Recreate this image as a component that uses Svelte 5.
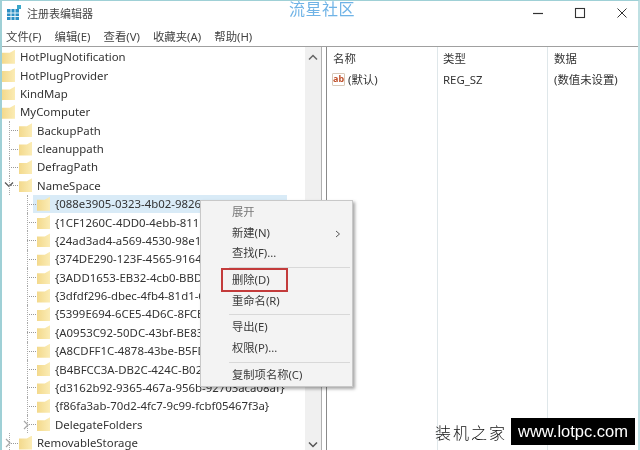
<script>
	const menus = ["文件(F)", "编辑(E)", "查看(V)", "收藏夹(A)", "帮助(H)"];

	// depth: 0 root, 1 child, 2 grandchild
	const rows = [
		{ name: "HotPlugNotification", depth: 0 },
		{ name: "HotPlugProvider", depth: 0 },
		{ name: "KindMap", depth: 0 },
		{ name: "MyComputer", depth: 0 },
		{ name: "BackupPath", depth: 1 },
		{ name: "cleanuppath", depth: 1 },
		{ name: "DefragPath", depth: 1 },
		{ name: "NameSpace", depth: 1, arrow: "open" },
		{ name: "{088e3905-0323-4b02-9826-5d99428e115f}", depth: 2, selected: true },
		{ name: "{1CF1260C-4DD0-4ebb-811F-33C572699FDE}", depth: 2 },
		{ name: "{24ad3ad4-a569-4530-98e1-ab02f9417aa8}", depth: 2 },
		{ name: "{374DE290-123F-4565-9164-39C4925E467B}", depth: 2 },
		{ name: "{3ADD1653-EB32-4cb0-BBD7-DFA0ABB5ACCA}", depth: 2 },
		{ name: "{3dfdf296-dbec-4fb4-81d1-6a3438bcf4de}", depth: 2 },
		{ name: "{5399E694-6CE5-4D6C-8FCE-1D8870FDCBA0}", depth: 2 },
		{ name: "{A0953C92-50DC-43bf-BE83-3742FED03C9C}", depth: 2 },
		{ name: "{A8CDFF1C-4878-43be-B5FD-F8091C1C60D0}", depth: 2 },
		{ name: "{B4BFCC3A-DB2C-424C-B029-7FE99A87C641}", depth: 2 },
		{ name: "{d3162b92-9365-467a-956b-92703aca08af}", depth: 2 },
		{ name: "{f86fa3ab-70d2-4fc7-9c99-fcbf05467f3a}", depth: 2 },
		{ name: "DelegateFolders", depth: 2, arrow: "closed" },
		{ name: "RemovableStorage", depth: 1, arrow: "closed" },
	];

	const menuGroups = [
		[{ label: "展开", disabled: true }, { label: "新建(N)", sub: true }, { label: "查找(F)..." }],
		[{ label: "删除(D)", marked: true }, { label: "重命名(R)" }],
		[{ label: "导出(E)" }, { label: "权限(P)..." }],
		[{ label: "复制项名称(C)" }],
	];
</script>

<div class="window">
	<header class="titlebar">
		<svg class="appicon" width="16" height="16" viewBox="0 0 16 16">
			<rect x="1" y="4" width="12" height="11" fill="#2b8fc4" />
			<path d="M1 8h12M1 11.5h12M5 4v11M9 4v11" stroke="#e8f4fa" stroke-width="1" />
			<rect x="11" y="0" width="4" height="4" fill="#3aa7c9" />
		</svg>
		<span class="title">注册表编辑器</span>
		<div class="controls">
			<svg width="12" height="12" viewBox="0 0 12 12"><path d="M1 6.5h10" stroke="#333" stroke-width="1.2" /></svg>
			<svg width="12" height="12" viewBox="0 0 12 12"><rect x="1.5" y="1.5" width="9" height="9" fill="none" stroke="#333" stroke-width="1.1" /></svg>
			<svg width="12" height="12" viewBox="0 0 12 12"><path d="M1.5 1.5l9 9M10.5 1.5l-9 9" stroke="#333" stroke-width="1" /></svg>
		</div>
	</header>

	<nav class="menubar">
		{#each menus as m}
			<span>{m}</span>
		{/each}
	</nav>

	<main class="panes">
		<section class="tree">
			<div class="rows">
				{#each rows as r}
					<div class="row d{r.depth}" class:selected={r.selected}>
						{#if r.arrow == "open"}
							<svg class="arrow" width="10" height="8" viewBox="0 0 10 8"><path d="M1 1.5l4 4 4-4" fill="none" stroke="#555" stroke-width="1.2" /></svg>
						{:else if r.arrow == "closed"}
							<svg class="arrow" width="8" height="10" viewBox="0 0 8 10"><path d="M2 1l4 4-4 4" fill="none" stroke="#a6a6a6" stroke-width="1.2" /></svg>
						{/if}
						{#if r.depth > 0}<i class="dots"></i>{/if}
						<span class="folder"></span>
						<span class="label">{r.name}</span>
					</div>
				{/each}
			</div>
			<div class="scrollbar">
				<svg width="10" height="7" viewBox="0 0 10 7"><path d="M1 5.5l4-4 4 4" fill="none" stroke="#666" stroke-width="1.5" /></svg>
				<svg width="10" height="7" viewBox="0 0 10 7"><path d="M1 1.5l4 4 4-4" fill="none" stroke="#555" stroke-width="1.5" /></svg>
			</div>
		</section>

		<section class="values">
			<div class="cols head">
				<span>名称</span><span>类型</span><span>数据</span>
			</div>
			<div class="cols item">
				<span class="named">
					<span class="ab">ab</span>(默认)
				</span>
				<span>REG_SZ</span>
				<span>(数值未设置)</span>
			</div>
		</section>
	</main>

	<div class="watermark">流星社区</div>

	<div class="context">
		{#each menuGroups as group, i}
			{#if i > 0}<div class="sep"></div>{/if}
			{#each group as it}
				<div class="entry" class:disabled={it.disabled}>
					{it.label}
					{#if it.sub}
						<svg class="sub" width="6" height="8" viewBox="0 0 6 8"><path d="M1 1l3.5 3L1 7" fill="none" stroke="#555" stroke-width="1" /></svg>
					{/if}
					{#if it.marked}<div class="redbox"></div>{/if}
				</div>
			{/each}
		{/each}
	</div>

	<div class="brand">
		<span class="brand-cn">装机之家</span>
		<span class="brand-url">www.lotpc.com</span>
	</div>
</div>

<style>
	:global(body) {
		background: #fff;
	}

	.window {
		position: relative;
		width: 640px;
		height: 450px;
		overflow: hidden;
		box-sizing: border-box;
		display: flex;
		flex-direction: column;
		background: #fff;
		border-top: 1px solid #9fd0d6;
		border-left: 2px solid #9fd0d6;
		border-right: 2px solid #bfe0e3;
		font-family: "Noto Sans", "Noto Sans CJK SC", sans-serif;
		font-size: 11.4px;
		color: #333;
		filter: blur(0.4px);
	}

	.titlebar {
		height: 24px;
		flex: none;
		display: flex;
		align-items: center;
		padding: 0 0 0 4px;
		box-sizing: border-box;
	}

	.appicon {
		margin-right: 5px;
	}

	.title {
		font-size: 11px;
		color: #444;
	}

	.controls {
		margin-left: auto;
		display: flex;
		gap: 30px;
		padding-right: 10px;
	}

	.menubar {
		height: 21px;
		flex: none;
		display: flex;
		gap: 13px;
		align-items: center;
		padding: 1px 0 0 4px;
		box-sizing: border-box;
		color: #444;
	}

	.panes {
		flex: 1;
		min-height: 0;
		display: flex;
		border-top: 1px solid #a0a0a0;
	}

	.tree {
		width: 320px;
		flex: none;
		display: flex;
		border-right: 1px solid #b0b0b0;
		box-sizing: border-box;
	}

	.rows {
		flex: 1;
		min-width: 0;
		padding-top: 0.5px;
		overflow: hidden;
	}

	.row {
		position: relative;
		height: 18.38px;
		display: flex;
		align-items: center;
		white-space: nowrap;
	}

	.d0 { padding-left: 0; }
	.d1 { padding-left: 17px; }
	.d2 { padding-left: 35px; }

	.folder {
		position: relative;
		flex: none;
		width: 13px;
		height: 14px;
		background: linear-gradient(90deg, #f3d98c, #fbecb5);
		box-sizing: border-box;
		clip-path: polygon(0 3px, 60% 3px, 100% 0, 100% 100%, 0 100%);
	}

	.label {
		position: relative;
		margin-left: 5px;
		flex: 1;
		min-width: 0;
	}

	.selected::before {
		content: "";
		position: absolute;
		left: 31px;
		right: 18px;
		top: 0;
		bottom: 0;
		background: #d9ebf7;
	}

	.dots {
		position: absolute;
		top: 50%;
		height: 0;
		border-top: 1px dotted #999;
	}

	.d1 .dots {
		left: 7px;
		width: 9px;
	}

	.d2 .dots {
		left: 25px;
		width: 9px;
	}

	.d1::after,
	.d2::after {
		content: "";
		position: absolute;
		top: 0;
		bottom: 0;
		border-left: 1px dotted #aaa;
	}

	.d1::after { left: 7px; }
	.d2::after { left: 25px; }

	.arrow {
		position: absolute;
		top: 5px;
	}

	.d1 .arrow { left: 2px; }
	.d2 .arrow { left: 20px; }

	.scrollbar {
		width: 16px;
		flex: none;
		background: #f0f0f0;
		display: flex;
		flex-direction: column;
		justify-content: space-between;
		align-items: center;
		padding: 7px 0 2px;
		box-sizing: border-box;
	}

	.values {
		flex: 1;
		margin-left: 4px;
		border-left: 1px solid #8a8a8a;
		min-width: 0;
		background: linear-gradient(90deg, transparent 110px, #dfe7ea 110px, #dfe7ea 111px, transparent 111px, transparent 220px, #dfe7ea 220px, #dfe7ea 221px, transparent 221px);
	}

	.cols {
		display: grid;
		grid-template-columns: 110px 111px 1fr;
	}

	.cols span {
		padding-left: 6px;
	}

	.head {
		height: 22px;
		align-items: center;
	}

	.item {
		height: 20px;
		align-items: center;
	}

	.cols .named {
		display: flex;
		align-items: center;
		gap: 3px;
		padding-left: 5px;
	}

	.ab {
		width: 13px;
		height: 13px;
		border: 1px solid #d8c8b8;
		border-radius: 1px;
		box-sizing: border-box;
		background: #fff;
		color: #c0502a;
		font-size: 9px;
		font-weight: 700;
		line-height: 10px;
		text-align: center;
		padding: 0 !important;
	}

	.watermark {
		position: absolute;
		left: 287px;
		top: 0;
		font-family: "Noto Sans CJK SC", sans-serif;
		font-size: 16px;
		letter-spacing: 0.5px;
		color: #6fb3e6;
		line-height: 15px;
	}

	.context {
		position: absolute;
		z-index: 2;
		left: 198px;
		top: 199px;
		width: 153px;
		height: 187px;
		box-sizing: border-box;
		background: #f3f3f3;
		border: 1px solid #c8c8c8;
		box-shadow: 2px 2px 3px rgba(0, 0, 0, 0.35);
		padding-top: 1px;
		font-size: 11.3px;
	}

	.entry {
		position: relative;
		height: 20.7px;
		line-height: 20.7px;
		padding-left: 31px;
		color: #3a3a3a;
		white-space: nowrap;
	}

	.disabled {
		color: #777;
	}

	.sub {
		position: absolute;
		right: 11px;
		top: 7px;
	}

	.sep {
		height: 1px;
		background: #d8d8d8;
		margin: 3px 2px 2px 28px;
	}

	.redbox {
		position: absolute;
		left: 20px;
		top: -2px;
		width: 67px;
		height: 24px;
		box-sizing: border-box;
		border: 2px solid #c33b3b;
	}

	.brand {
		position: absolute;
		right: 3px;
		bottom: 5px;
		display: flex;
		align-items: center;
		gap: 4px;
	}

	.brand-cn {
		font-family: "Noto Sans CJK SC", sans-serif;
		font-size: 16px;
		font-weight: 300;
		letter-spacing: 2px;
		color: #111;
	}

	.brand-url {
		background: #000;
		color: #fff;
		font-family: "Liberation Sans", sans-serif;
		font-size: 16.5px;
		height: 27px;
		line-height: 27px;
		padding: 0 7px;
	}
</style>
